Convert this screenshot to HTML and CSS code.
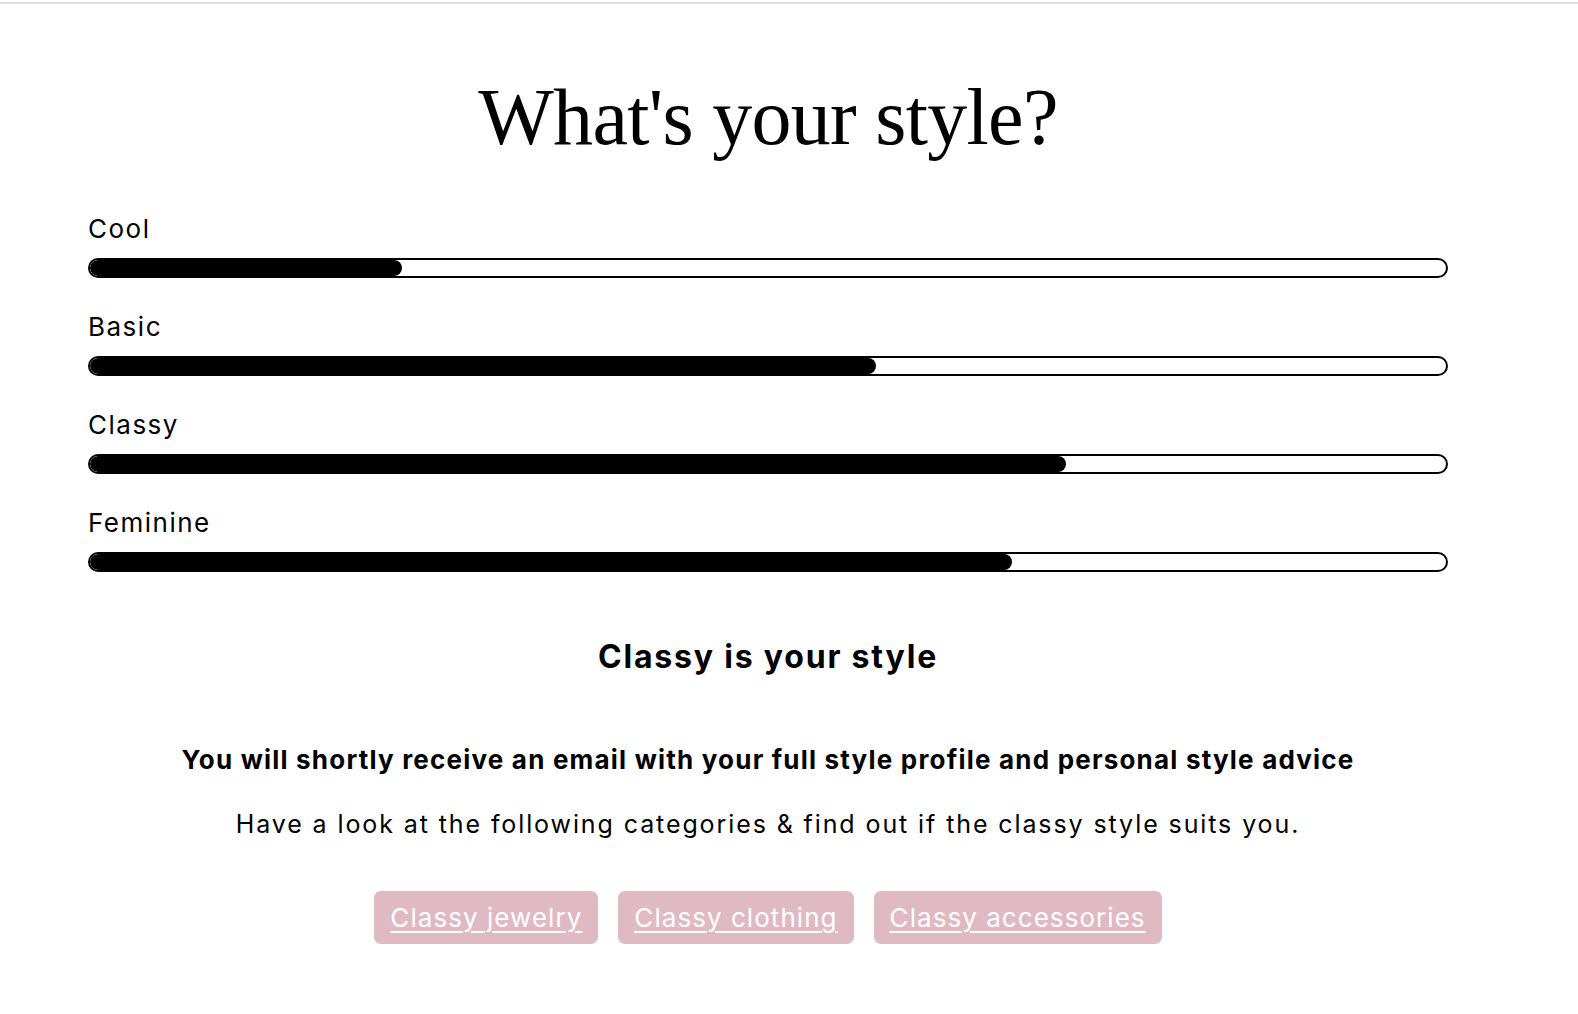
FILE: index.html
```html
<!DOCTYPE html>
<html lang="en">
<head>
    <meta charset="UTF-8">
    <meta name="viewport" content="width=device-width, initial-scale=1.0">
    <title>Style quiz result</title>
    <link rel="stylesheet" href="styles.css">
</head>
<body>
    <div class="topline"></div>
    <div class="result">
        <h1 class="title">What's your style?</h1>

        <!-- SCORES -->
        <div class="scores">
            <div class="score">
                <div class="label">Cool</div>
                <div class="bar"><div class="fill" style="width: 23%"></div></div>
            </div>
            <div class="score">
                <div class="label">Basic</div>
                <div class="bar"><div class="fill" style="width: 58%"></div></div>
            </div>
            <div class="score">
                <div class="label">Classy</div>
                <div class="bar"><div class="fill" style="width: 72%"></div></div>
            </div>
            <div class="score">
                <div class="label">Feminine</div>
                <div class="bar"><div class="fill" style="width: 68%"></div></div>
            </div>
        </div>

        <!-- RESULT TEXT -->
        <h2 class="winner">Classy is your style</h2>
        <p class="notice">You will shortly receive an email with your full style profile and personal style advice</p>
        <p class="intro">Have a look at the following categories &amp; find out if the classy style suits you.</p>

        <div class="links">
            <a href="#" class="cat">Classy jewelry</a>
            <a href="#" class="cat">Classy clothing</a>
            <a href="#" class="cat">Classy accessories</a>
        </div>
    </div>
</body>
</html>
```

FILE: styles.css
```css
/*PAGE*/
body{
    margin: 0;
    background-color: #ffffff;
    color: #000000;
    font-family: "Inter", sans-serif;
}
.topline{
    margin-top: 2px;
    height: 2px;
    background-color: #dddddd;
}
.result{
    width: 1360px;
    margin-left: 88px;
    display: flex;
    flex-direction: column;
    align-items: center;
}
/*HEADING*/
.title{
    font-family: "Liberation Serif", serif;
    font-weight: 400;
    font-size: 80px;
    letter-spacing: -0.7px;
    line-height: 1;
    margin: 73px 0 0 0;
}
/*SCORE BARS*/
.scores{
    width: 100%;
    margin-top: 57px;
    display: flex;
    flex-direction: column;
    gap: 34px;
}
.label{
    font-size: 26px;
    line-height: 30px;
    margin-bottom: 14px;
    letter-spacing: 1.5px;
}
.bar{
    height: 16px;
    border: 2px solid #000;
    border-radius: 10px;
    overflow: hidden;
}
.fill{
    height: 100%;
    background-color: #000;
    border-radius: 10px;
}
/*TEXT*/
.winner{
    font-weight: 700;
    font-size: 32px;
    letter-spacing: 1.8px;
    line-height: 40px;
    margin: 65px 0 0 0;
}
.notice{
    font-weight: 700;
    font-size: 26px;
    letter-spacing: 1.2px;
    line-height: 32px;
    margin: 67px 0 0 0;
}
.intro{
    font-size: 25px;
    letter-spacing: 1.9px;
    line-height: 32px;
    margin: 32px 0 0 0;
}
/*CATEGORY BUTTONS*/
.links{
    display: flex;
    gap: 20px;
    margin-top: 51px;
}
.cat{
    font-size: 26px;
    letter-spacing: 1.05px;
    line-height: 33px;
    color: #ffffff;
    background-color: #e0bac3;
    border-radius: 7px;
    padding: 10px 16px;
    text-decoration: underline;
    text-decoration-thickness: 2px;
    text-underline-offset: 4px;
}
```
